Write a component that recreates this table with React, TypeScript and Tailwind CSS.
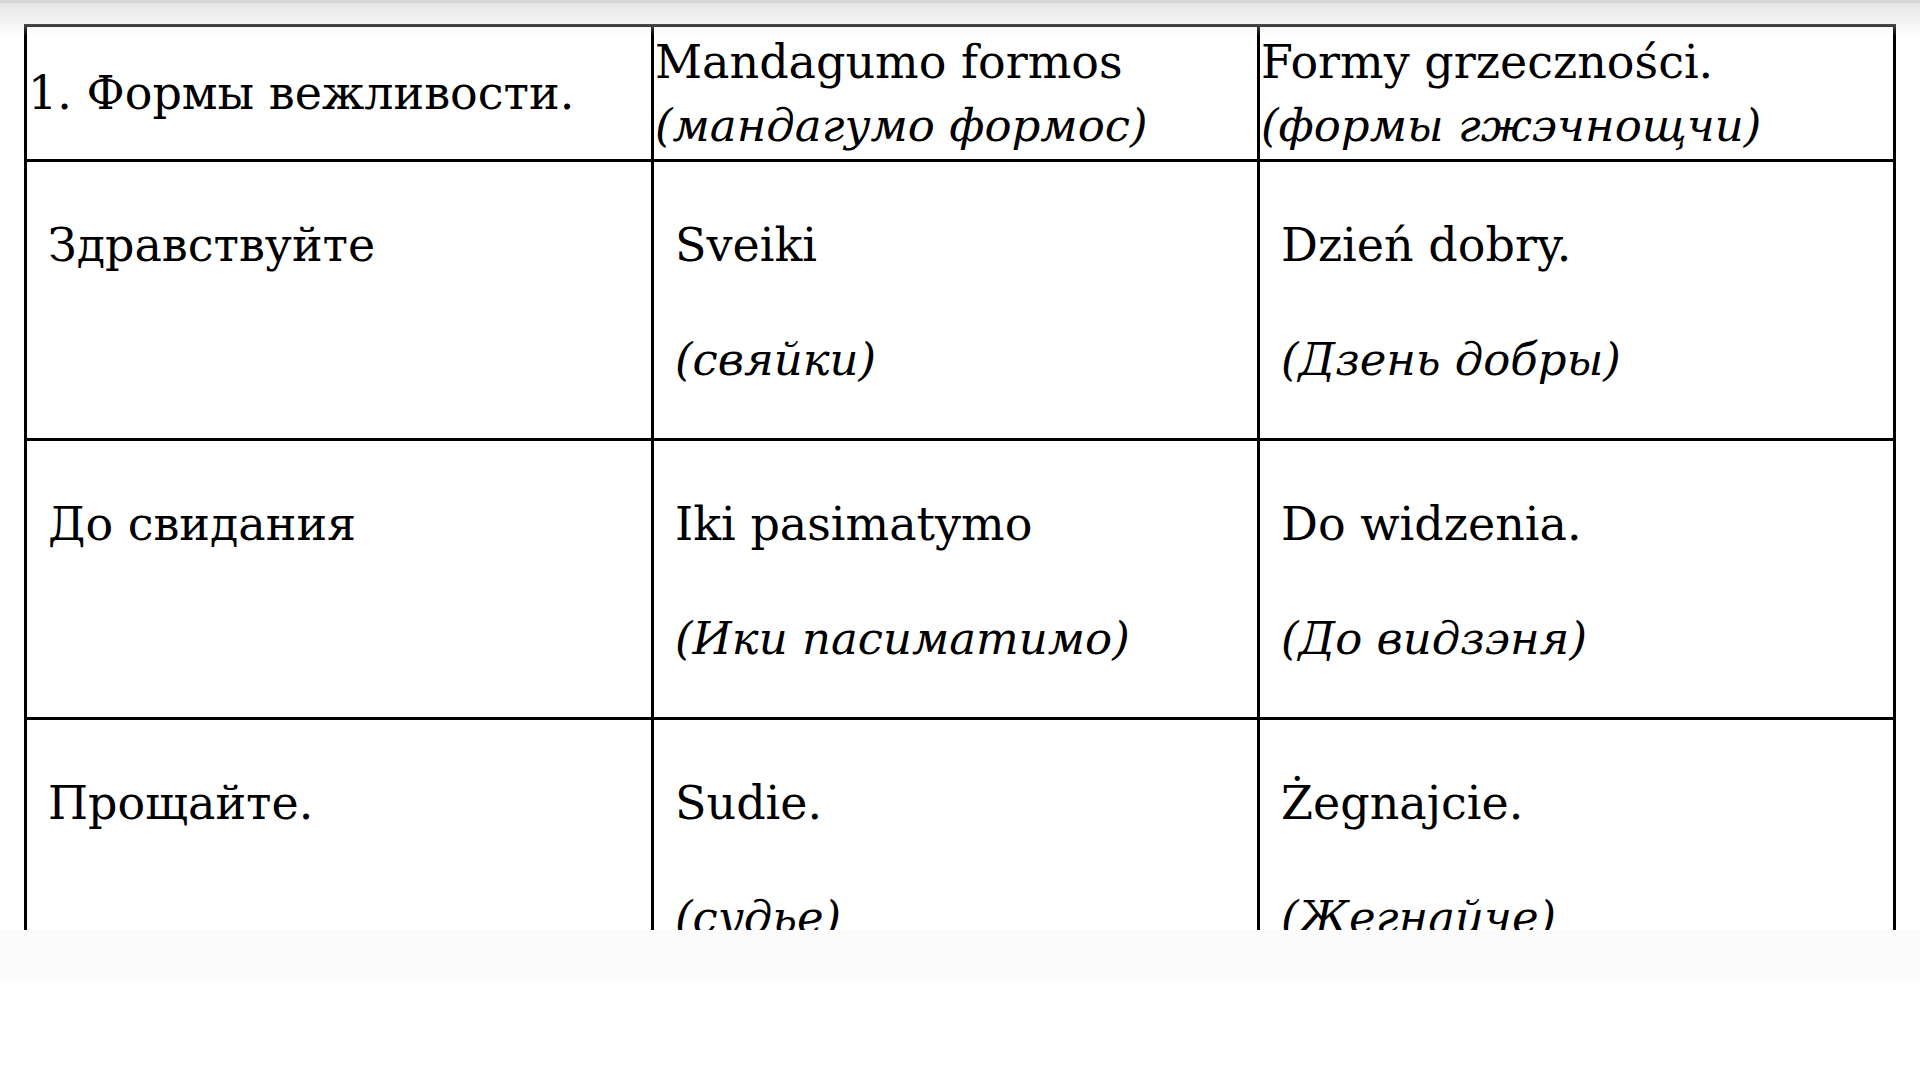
import React from 'react'

// Таблица «Формы вежливости» — три колонки: русский, литовский, польский.

type Row = { ru: string; lt: [string, string]; pl: [string, string] }

const rows: Row[] = [
  { ru: 'Здравствуйте', lt: ['Sveiki', '(свяйки)'], pl: ['Dzień dobry.', '(Дзень добры)'] },
  { ru: 'До свидания', lt: ['Iki pasimatymo', '(Ики пасиматимо)'], pl: ['Do widzenia.', '(До видзэня)'] },
  { ru: 'Прощайте.', lt: ['Sudie.', '(судье)'], pl: ['Żegnajcie.', '(Жегнайче)'] },
]

const font = "font-['DejaVu_Serif',serif]"
const cell = 'border-r-[3px] border-b-[3px] border-black'

function Body({ main, note }: { main: string; note?: string }) {
  return (
    <div className={`${cell} h-[279px] pl-[21px] pt-[55px]`}>
      <p>{main}</p>
      {note && <p className="mt-[57px] italic text-[45px]">{note}</p>}
    </div>
  )
}

export default function App() {
  return (
    <div className={`${font} relative h-[1080px] bg-white text-black text-[46px] leading-[57px]`}>
      <div className="h-[930px] overflow-hidden pt-6 px-6">
        <div className="grid grid-cols-[627px_606px_636px] border-l-[3px] border-t-[3px] border-black">
          <div className={`${cell} h-[135px] flex items-center pl-px`}>1. Формы вежливости.</div>
          <div className={`${cell} h-[135px] pt-[3px] pl-px leading-[64px]`}>
            <p>Mandagumo formos</p>
            <p className="italic text-[45px]">(мандагумо формос)</p>
          </div>
          <div className={`${cell} h-[135px] pt-[3px] pl-px leading-[64px]`}>
            <p>Formy grzeczności.</p>
            <p className="italic text-[45px]">(формы гжэчнощчи)</p>
          </div>
          {rows.map((r) => (
            <React.Fragment key={r.ru}>
              <Body main={r.ru} />
              <Body main={r.lt[0]} note={r.lt[1]} />
              <Body main={r.pl[0]} note={r.pl[1]} />
            </React.Fragment>
          ))}
        </div>
      </div>
      <div className="h-[53px] bg-[#fbfbfb]" />

      {/* тень от верхней панели поверх документа */}
      <div className="pointer-events-none absolute inset-x-0 top-0 h-[36px] bg-gradient-to-b from-[#e2e2e2] to-white/0" />
      <div className="pointer-events-none absolute inset-x-0 top-0 h-[3px] bg-[#d6d6d6]" />
    </div>
  )
}
